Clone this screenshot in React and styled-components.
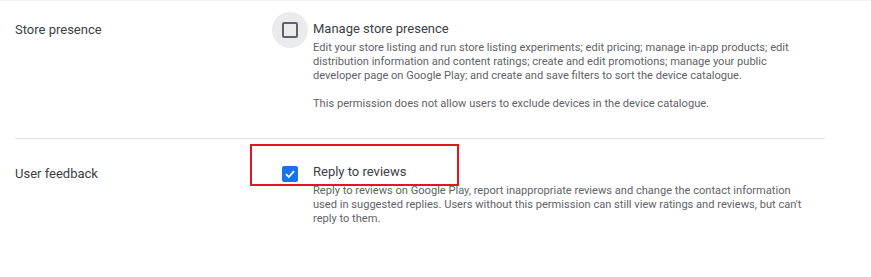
import React from 'react';
import styled, { createGlobalStyle } from 'styled-components';

const GlobalStyle = createGlobalStyle`
  body {
    margin: 0;
    background: #fff;
    font-family: Roboto, 'Liberation Sans', sans-serif;
  }
`;

const Page = styled.div`
  width: 871px;
  height: 277px;
  overflow: hidden;
  border-top: 1px solid #f1f3f4;
  box-sizing: border-box;
`;

const Section = styled.div`
  position: relative;
  display: flex;
  align-items: flex-start;
  margin: 0 46px 0 15px;
  padding: ${p => p.$pad};
  border-bottom: ${p => (p.$divider ? '1px solid #e0e0e0' : 'none')};
`;

const Label = styled.div`
  width: 257px;
  flex-shrink: 0;
  font-size: 13px;
  line-height: 20px;
  color: #3c4043;
  padding-top: ${p => p.$top}px;
`;

const BoxWrap = styled.div`
  width: 36px;
  height: 36px;
  flex-shrink: 0;
  border-radius: 50%;
  display: flex;
  align-items: center;
  justify-content: center;
  background: ${p => (p.$hover ? '#ebebeb' : 'transparent')};
  margin: ${p => p.$top}px 5px 0 0;
`;

const Box = styled.div`
  width: 16px;
  height: 16px;
  box-sizing: border-box;
  border-radius: 2px;
  border: 2px solid ${p => (p.$checked ? '#1a73e8' : '#5f6368')};
  background: ${p => (p.$checked ? '#1a73e8' : 'transparent')};
  display: flex;
  align-items: center;
  justify-content: center;
`;

const Body = styled.div`
  width: 500px;
  flex-shrink: 0;
  padding-top: ${p => p.$top}px;
`;

const Title = styled.div`
  font-size: 13px;
  line-height: 20px;
  padding-bottom: 2px;
  color: #3c4043;
`;

const Desc = styled.p`
  margin: 0;
  font-size: 11.1px;
  line-height: 14px;
  color: #5f6368;
  & + & {
    margin-top: 14px;
  }
`;

const Highlight = styled.div`
  position: absolute;
  left: 235px;
  top: 5px;
  width: 209px;
  height: 42px;
  box-sizing: border-box;
  border: 2px solid #e3161b;
  pointer-events: none;
`;

const Check = () => (
  <svg width="12" height="12" viewBox="0 0 12 12">
    <path d="M2 6.2 L4.8 9 L10 3.2" fill="none" stroke="#fff" strokeWidth="1.8" />
  </svg>
);

export default function App() {
  return (
    <Page>
      <GlobalStyle />
      <Section $divider $pad="11px 0 27px">
        <Label $top={8}>Store presence</Label>
        <BoxWrap $hover $top={0}>
          <Box />
        </BoxWrap>
        <Body $top={7}>
          <Title>Manage store presence</Title>
          <Desc>
            Edit your store listing and run store listing experiments; edit pricing; manage in-app
            products; edit distribution information and content ratings; create and edit
            promotions; manage your public developer page on Google Play; and create and save
            filters to sort the device catalogue.
          </Desc>
          <Desc>This permission does not allow users to exclude devices in the device catalogue.</Desc>
        </Body>
      </Section>
      <Section $pad="0">
        <Label $top={25}>User feedback</Label>
        <BoxWrap $top={17}>
          <Box $checked>
            <Check />
          </Box>
        </BoxWrap>
        <Body $top={23}>
          <Title>Reply to reviews</Title>
          <Desc>
            Reply to reviews on Google Play, report inappropriate reviews and change the contact
            information used in suggested replies. Users without this permission can still view
            ratings and reviews, but can't reply to them.
          </Desc>
        </Body>
        <Highlight />
      </Section>
    </Page>
  );
}
